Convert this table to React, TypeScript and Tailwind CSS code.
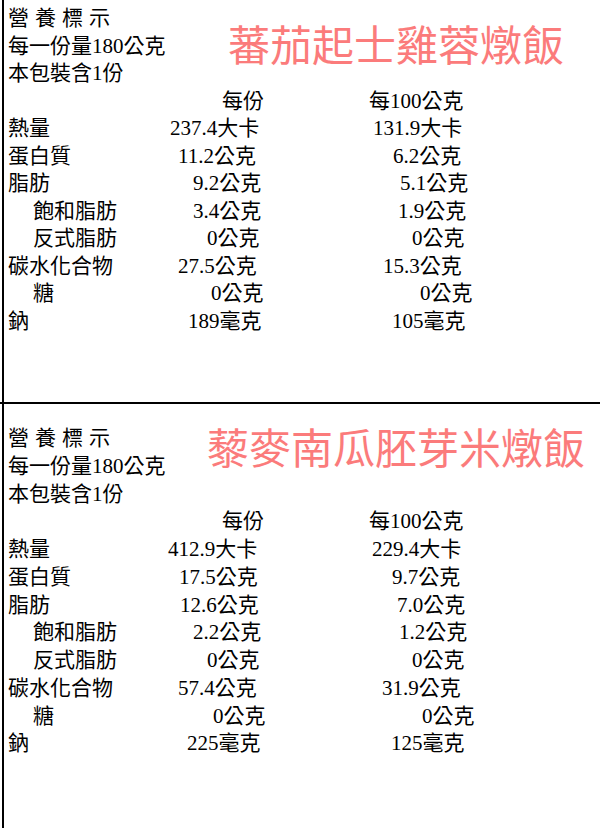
import React from 'react';

type Row = {
  label: string;
  sub?: boolean;
  v1: string;
  x1: number;
  v2: string;
  x2: number;
};

type Panel = {
  title: string;
  headClass: string;
  titleClass: string;
  panelClass: string;
  rows: Row[];
};

const LEFT = 8;

const panels: Panel[] = [
  {
    title: '蕃茄起士雞蓉燉飯',
    headClass: 'w-[220px]',
    titleClass: 'mt-[17px]',
    panelClass: 'h-[402px] pt-[5px] leading-[27.55px]',
    rows: [
      { label: '熱量', v1: '237.4大卡', x1: 170, v2: '131.9大卡', x2: 373 },
      { label: '蛋白質', v1: '11.2公克', x1: 178, v2: '6.2公克', x2: 393 },
      { label: '脂肪', v1: '9.2公克', x1: 193, v2: '5.1公克', x2: 400 },
      { label: '飽和脂肪', sub: true, v1: '3.4公克', x1: 193, v2: '1.9公克', x2: 398 },
      { label: '反式脂肪', sub: true, v1: '0公克', x1: 207, v2: '0公克', x2: 412 },
      { label: '碳水化合物', v1: '27.5公克', x1: 178, v2: '15.3公克', x2: 383 },
      { label: '糖', sub: true, v1: '0公克', x1: 211, v2: '0公克', x2: 420 },
      { label: '鈉', v1: '189毫克', x1: 188, v2: '105毫克', x2: 392 },
    ],
  },
  {
    title: '藜麥南瓜胚芽米燉飯',
    headClass: 'w-[199px]',
    titleClass: 'mt-[0px]',
    panelClass: 'flex-1 pt-[21px] leading-[27.75px]',
    rows: [
      { label: '熱量', v1: '412.9大卡', x1: 168, v2: '229.4大卡', x2: 372 },
      { label: '蛋白質', v1: '17.5公克', x1: 179, v2: '9.7公克', x2: 392 },
      { label: '脂肪', v1: '12.6公克', x1: 180, v2: '7.0公克', x2: 397 },
      { label: '飽和脂肪', sub: true, v1: '2.2公克', x1: 193, v2: '1.2公克', x2: 399 },
      { label: '反式脂肪', sub: true, v1: '0公克', x1: 207, v2: '0公克', x2: 412 },
      { label: '碳水化合物', v1: '57.4公克', x1: 178, v2: '31.9公克', x2: 382 },
      { label: '糖', sub: true, v1: '0公克', x1: 213, v2: '0公克', x2: 422 },
      { label: '鈉', v1: '225毫克', x1: 187, v2: '125毫克', x2: 391 },
    ],
  },
];

const NutritionPanel: React.FC<{ panel: Panel }> = ({ panel }) => (
  <div className={`ml-[2px] border-l-2 border-black pl-[4px] ${panel.panelClass}`}>
    <div className="flex">
      <div className={`${panel.headClass} shrink-0`}>
        <div className="tracking-[6px]">營養標示</div>
        <div>每一份量180公克</div>
        <div>本包裝含1份</div>
      </div>
      <div
        className={`${panel.titleClass} text-[42px] leading-none text-[#fb7b7b] whitespace-nowrap`}
        style={{ fontFamily: '"Noto Sans CJK TC", sans-serif' }}
      >
        {panel.title}
      </div>
    </div>

    {/* column headers */}
    <div className="flex">
      <span className="shrink-0" style={{ width: 222 - LEFT }} />
      <span className="shrink-0" style={{ width: 369 - 222 }}>每份</span>
      <span>每100公克</span>
    </div>

    {panel.rows.map(row => (
      <div key={row.label} className="flex whitespace-nowrap">
        <span className={`shrink-0 ${row.sub ? 'pl-[25px]' : ''}`} style={{ width: row.x1 - LEFT }}>
          {row.label}
        </span>
        <span className="shrink-0" style={{ width: row.x2 - row.x1 }}>{row.v1}</span>
        <span>{row.v2}</span>
      </div>
    ))}
  </div>
);

export default function App() {
  return (
    <div
      className="w-[600px] h-[828px] bg-white text-black text-[21px] flex flex-col overflow-hidden"
      style={{ fontFamily: '"Liberation Serif", "Noto Sans CJK TC", serif' }}
    >
      <NutritionPanel panel={panels[0]} />
      <div className="h-[2px] w-full bg-black shrink-0" />
      <NutritionPanel panel={panels[1]} />
    </div>
  );
}
